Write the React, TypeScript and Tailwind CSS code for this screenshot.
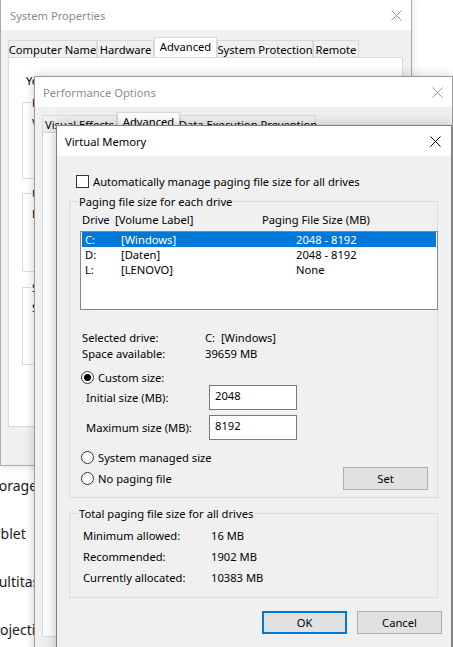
import type { ReactNode } from 'react'

function CloseX({ active }: { active?: boolean }) {
  return (
    <svg width="11" height="11" viewBox="0 0 11 11" className="block">
      <path
        d="M0.5 0.5L10.5 10.5M10.5 0.5L0.5 10.5"
        stroke={active ? '#000000' : '#9a9a9a'}
        strokeWidth="1"
      />
    </svg>
  )
}

function TitleBar({ title, active, pl, pr }: { title: string; active?: boolean; pl: string; pr: string }) {
  return (
    <div className={`flex h-[30px] items-center justify-between bg-white ${pl} ${pr}`}>
      <span className={active ? 'text-black' : 'text-[#8c8c8c]'}>{title}</span>
      <CloseX active={active} />
    </div>
  )
}

function Tab({ label, w, selected }: { label: string; w: string; selected?: boolean }) {
  if (selected) {
    return (
      <div className={`flex h-[20px] shrink-0 justify-center whitespace-nowrap border border-b-0 border-[#d9d9d9] bg-white pt-[1px] ${w}`}>
        <span>{label}</span>
      </div>
    )
  }
  return (
    <div className={`flex h-[17px] shrink-0 items-center justify-center whitespace-nowrap border border-b-0 border-[#d9d9d9] bg-[#f0f0f0] ${w}`}>
      <span>{label}</span>
    </div>
  )
}

function Group({ legend, className, children }: { legend: string; className: string; children?: ReactNode }) {
  return (
    <div className={`border border-[#dcdcdc] ${className}`}>
      <div className="-mt-[8px] ml-[8px] w-fit whitespace-nowrap bg-inherit px-[1px] leading-[15px]">{legend}</div>
      {children}
    </div>
  )
}

function Radio({ checked }: { checked?: boolean }) {
  return (
    <span className="flex h-[13px] w-[13px] shrink-0 items-center justify-center rounded-full border border-[#333333] bg-white">
      {checked ? <span className="h-[7px] w-[7px] rounded-full bg-black" /> : null}
    </span>
  )
}

function Button({ label, primary }: { label: string; primary?: boolean }) {
  return (
    <div
      className={`flex h-[23px] w-[85px] items-center justify-center bg-[#e1e1e1] ${
        primary ? 'border-2 border-[#0078d7]' : 'border border-[#adadad]'
      }`}
    >
      {label}
    </div>
  )
}

const drives = [
  { d: 'C:', label: '[Windows]', size: '2048 - 8192', selected: true },
  { d: 'D:', label: '[Daten]', size: '2048 - 8192' },
  { d: 'L:', label: '[LENOVO]', size: 'None' },
]

function SystemProperties() {
  return (
    <div className="absolute -top-px left-0 h-[467px] w-[412px] border border-[#aaaaaa] bg-[#f0f0f0] shadow-[0_0_8px_rgba(0,0,0,0.15)]">
      <TitleBar title="System Properties" pl="pl-[9px]" pr="pr-[9px]" />
      <div className="ml-[7px] mt-[7px] flex h-[20px] items-end">
        <Tab label="Computer Name" w="w-[89px]" />
        <Tab label="Hardware" w="w-[57px]" />
        <Tab label="Advanced" w="w-[63px]" selected />
        <Tab label="System Protection" w="w-[96px]" />
        <Tab label="Remote" w="w-[46px]" />
      </div>
      <div className="ml-[7px] h-[370px] w-[395px] border border-[#d9d9d9] bg-white">
        <p className="ml-[17px] mt-[15px] whitespace-nowrap leading-[15px]">
          You must be logged on as an Administrator to make most of these changes.
        </p>
        <Group legend="Performance" className="ml-[13px] mt-[14px] h-[77px] w-[366px] bg-white">
          <div className="ml-[9px] mt-[5px] whitespace-nowrap leading-[15px]">
            Visual effects, processor scheduling, memory usage, and virtual memory
          </div>
        </Group>
        <Group legend="User Profiles" className="ml-[13px] mt-[14px] h-[79px] w-[366px] bg-white">
          <div className="ml-[9px] mt-[5px] whitespace-nowrap leading-[15px]">
            Desktop settings related to your sign-in
          </div>
        </Group>
        <Group legend="Startup and Recovery" className="ml-[13px] mt-[15px] h-[78px] w-[366px] bg-white">
          <div className="ml-[9px] mt-[5px] whitespace-nowrap leading-[15px]">
            System startup, system failure, and debugging information
          </div>
        </Group>
      </div>
    </div>
  )
}

function PerformanceOptions() {
  return (
    <div className="absolute left-[34px] top-[76px] h-[600px] w-[419px] border border-[#9a9a9a] bg-[#f0f0f0] shadow-[0_0_10px_rgba(0,0,0,0.2)]">
      <TitleBar title="Performance Options" pl="pl-[8px]" pr="pr-[9px]" />
      <div className="ml-[7px] mt-[5px] flex h-[20px] items-end">
        <Tab label="Visual Effects" w="w-[75px]" />
        <Tab label="Advanced" w="w-[63px]" selected />
        <Tab label="Data Execution Prevention" w="w-[136px]" />
      </div>
      <div className="ml-[7px] h-[505px] w-[398px] border border-[#d9d9d9] bg-white" />
    </div>
  )
}

function VirtualMemory() {
  return (
    <div className="absolute left-[56px] top-[125px] h-[540px] w-[396px] border border-[#7f7f7f] bg-[#f0f0f0] shadow-[0_0_12px_rgba(0,0,0,0.25)]">
      <TitleBar title="Virtual Memory" active pl="pl-[8px]" pr="pr-[10px]" />

      <div className="ml-[19px] mt-[18px] flex h-[14px] items-center gap-[4px]">
        <span className="h-[13px] w-[13px] border border-[#333333] bg-white" />
        <span>Automatically manage paging file size for all drives</span>
      </div>

      <Group legend="Paging file size for each drive" className="ml-[12px] mt-[13px] w-[369px] bg-[#f0f0f0] pb-[7px]">
        <div className="mt-[3px] flex h-[15px] items-center pl-[12px]">
          <span className="w-[33px]">Drive</span>
          <span className="w-[147px]">[Volume Label]</span>
          <span>Paging File Size (MB)</span>
        </div>
        <div className="ml-[10px] mt-[4px] h-[79px] w-[358px] border border-[#828790] bg-white px-[1px]">
          {drives.map((r) => (
            <div
              key={r.d}
              className={`flex h-[15px] items-center pl-[3px] ${r.selected ? 'bg-[#0078d7] text-white' : ''}`}
            >
              <span className="w-[36px]">{r.d}</span>
              <span className="w-[175px]">{r.label}</span>
              <span>{r.size}</span>
            </div>
          ))}
        </div>

        <div className="ml-[12px] mt-[19px] grid grid-cols-[123px_1fr] grid-rows-[16px_16px] items-center">
          <span>Selected drive:</span>
          <span>C:&nbsp;&nbsp;[Windows]</span>
          <span>Space available:</span>
          <span>39659 MB</span>
        </div>

        <div className="ml-[11px] mt-[8px] flex h-[16px] items-center gap-[4px]">
          <Radio checked />
          <span>Custom size:</span>
        </div>
        <div className="ml-[16px] flex h-[25px] items-center">
          <span className="w-[123px]">Initial size (MB):</span>
          <div className="h-[25px] w-[88px] border border-[#7a7a7a] bg-white pl-[5px] pt-[2px] leading-[15px]">2048</div>
        </div>
        <div className="ml-[16px] mt-[5px] flex h-[25px] items-center">
          <span className="w-[123px]">Maximum size (MB):</span>
          <div className="h-[25px] w-[88px] border border-[#7a7a7a] bg-white pl-[5px] pt-[2px] leading-[15px]">8192</div>
        </div>

        <div className="mt-[9px] flex justify-between">
          <div className="ml-[11px] flex flex-col gap-[5px]">
            <div className="flex h-[16px] items-center gap-[4px]">
              <Radio />
              <span>System managed size</span>
            </div>
            <div className="flex h-[16px] items-center gap-[4px]">
              <Radio />
              <span>No paging file</span>
            </div>
          </div>
          <div className="mr-[9px] mt-[18px]">
            <Button label="Set" />
          </div>
        </div>
      </Group>

      <Group legend="Total paging file size for all drives" className="ml-[12px] mt-[15px] w-[369px] bg-[#f0f0f0] pb-[9px]">
        <div className="ml-[13px] mt-[4px] grid grid-cols-[128px_1fr] grid-rows-[21px_21px_21px] items-center">
          <span>Minimum allowed:</span>
          <span>16 MB</span>
          <span>Recommended:</span>
          <span>1902 MB</span>
          <span>Currently allocated:</span>
          <span>10383 MB</span>
        </div>
      </Group>

      <div className="mr-[9px] mt-[13px] flex justify-end gap-[10px]">
        <Button label="OK" primary />
        <Button label="Cancel" />
      </div>
    </div>
  )
}

export default function App() {
  return (
    <div className="relative h-[647px] w-[453px] overflow-hidden bg-white font-['Noto_Sans',sans-serif] text-[11.2px] leading-[15px] text-black">
      <div className="-ml-[14px] flex flex-col pt-[461px] text-[14px] text-[#1a1a1a]">
        {['Storage', 'Tablet', 'Multitasking', 'Projecting to this PC'].map((t) => (
          <div key={t} className="flex h-[48px] items-center whitespace-nowrap">
            {t}
          </div>
        ))}
      </div>
      <SystemProperties />
      <PerformanceOptions />
      <VirtualMemory />
    </div>
  )
}
